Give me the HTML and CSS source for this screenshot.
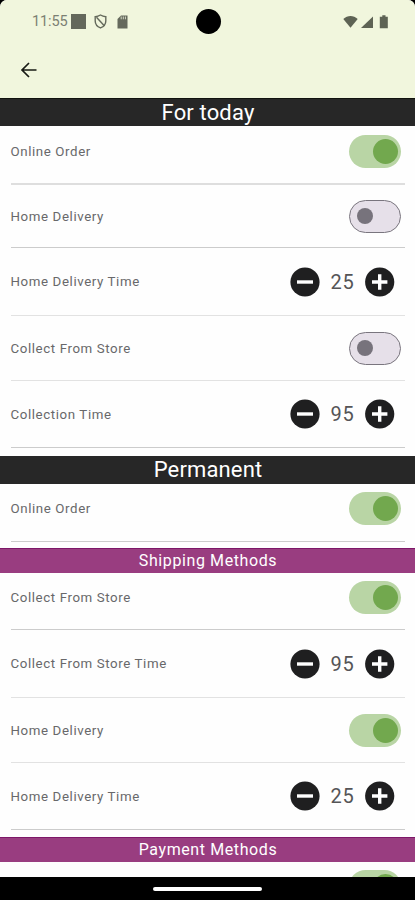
FILE: index.html
```html
<!DOCTYPE html>
<html lang="en">
<head>
<meta charset="utf-8">
<title>Store settings</title>
<link rel="stylesheet" href="styles.css">
</head>
<body>
<svg class="defs" width="0" height="0" aria-hidden="true">
  <symbol id="minus" viewBox="0 0 30 30"><circle cx="15" cy="15" r="14.6" fill="#1f1f20"/><path d="M7 15h16" stroke="#fff" stroke-width="3.4"/></symbol>
  <symbol id="plus" viewBox="0 0 30 30"><circle cx="14.700" cy="15" r="14.6" fill="#1f1f20"/><path d="M7 15h15.4M14.700 7.300v15.4" stroke="#fff" stroke-width="3.4"/></symbol>
</svg>
<div class="screen">
  <header class="top">
    <div class="status">
      <span class="clock">11:55</span>
      <span class="square"></span>
      <svg class="shield" width="13" height="15" viewBox="0 0 13 15" fill="none" stroke="#656a5c" stroke-width="1.4"><path d="M6.5 1C4.8 2 3 2.5 1.2 2.7V7c0 3.3 2.2 5.700 5.300 6.900C9.600 12.700 11.800 10.300 11.800 7V2.700C10 2.500 8.200 2 6.500 1z"/><path d="M2.500 3.200l7.500 8.300"/></svg>
      <svg class="sd" width="11" height="14" viewBox="0 0 11 14"><path d="M4 0.500h6.500v13H0.500V4z" fill="#65695c"/><path d="M4.200 1.500v2.800M6.300 1.500v2.800M8.400 1.500v2.800" stroke="#d5dac6" stroke-width="1"/></svg>
      <span class="camera"></span>
      <svg class="signals" width="46" height="14" viewBox="0 0 46 14" fill="#5e6354"><path d="M0.300 4C4.500 0 10.500 0 14.700 4L7.500 12.800z"/><path d="M30 1.500V13H18z"/><path d="M39.300 0.300h3.200v1.500h2.300V13.200h-8V1.800h2.500z"/></svg>
    </div>
    <svg class="back" width="18" height="18" viewBox="0 0 18 18" fill="none" stroke="#191b15" stroke-width="1.700"><path d="M16.500 9H2M9 2L2 9l7 7"/></svg>
  </header>
  <main>
    <h1 class="band">For today</h1>
    <div class="row first"><span>Online Order</span><i class="switch on"></i></div>
    <div class="row short"><span>Home Delivery</span><i class="switch"></i></div>
    <div class="row step tall light"><span>Home Delivery Time</span><div class="stepper"><svg><use href="#minus"/></svg><b>25</b><svg><use href="#plus"/></svg></div></div>
    <div class="row mid light"><span>Collect From Store</span><i class="switch"></i></div>
    <div class="row step"><span>Collection Time</span><div class="stepper"><svg><use href="#minus"/></svg><b>95</b><svg><use href="#plus"/></svg></div></div>
    <h1 class="band second">Permanent</h1>
    <div class="row first perm"><span>Online Order</span><i class="switch on"></i></div>
    <h2 class="sub">Shipping Methods</h2>
    <div class="row ship"><span>Collect From Store</span><i class="switch on"></i></div>
    <div class="row step tall light"><span>Collect From Store Time</span><div class="stepper"><svg><use href="#minus"/></svg><b>95</b><svg><use href="#plus"/></svg></div></div>
    <div class="row mid light"><span>Home Delivery</span><i class="switch on"></i></div>
    <div class="row step"><span>Home Delivery Time</span><div class="stepper"><svg><use href="#minus"/></svg><b>25</b><svg><use href="#plus"/></svg></div></div>
    <h2 class="sub">Payment Methods</h2>
    <div class="row ship"><i class="switch on"></i></div>
  </main>
  <footer class="nav"><span></span></footer>
</div>
</body>
</html>
```

FILE: styles.css
```css
* { box-sizing: border-box; }
body { margin: 0; background: #000; font-family: Roboto, "Liberation Sans", sans-serif; }
.defs { display: none; }
.screen { display: flex; flex-direction: column; height: 900px; overflow: hidden; background: #fefefe; border-radius: 7px 7px 0 0; }
.top { height: 99px; flex: none; background: #f1f6dd; border-bottom: 1px solid #11130e; }
.status { position: relative; display: flex; align-items: center; height: 43px; padding-left: 32px; padding-right: 26px; }
.clock { width: 38.5px; font-size: 14.5px; letter-spacing: -.1px; color: #7c8073; }
.square { width: 15px; height: 15px; background: #64685b; }
.shield { margin-left: 8px; }
.sd { margin-left: 10px; }
.signals { margin-left: auto; }
.camera { position: absolute; left: 195.5px; top: 9px; width: 25px; height: 25px; border-radius: 50%; background: #000; }
.back { display: block; margin: 18px 0 0 20px; }
main { flex: 1; min-height: 0; overflow: hidden; }
.band, .sub { margin: 0; padding-left: 1px; color: #fff; text-align: center; font-weight: 400; }
.band { height: 27px; background: #272727; font-size: 22px; line-height: 27px; letter-spacing: .15px; }
.second { height: 28px; margin-top: 8px; }
.sub { height: 25px; margin-top: 7px; background: #993d80; border-top: 1px solid #7d1768; font-size: 16px; line-height: 23px; letter-spacing: .6px; }
.row { display: flex; align-items: center; justify-content: space-between; height: 64px; margin: 0 10px 0 10.5px; padding-right: 4px; border-bottom: 1px solid #ccc; font-size: 13.3px; letter-spacing: .6px; color: #68686a; }
.row.light { border-color: #e2e2e2; }
.row.first { height: 59px; padding-bottom: 7px; border-bottom: 2px solid #dedede; }
.row.short { height: 63px; }
.row.ship { height: 57px; padding-bottom: 7px; }
.row.mid { height: 65px; }
.row.step { height: 67px; padding-right: 10px; }
.row.tall { height: 68px; }
.row.perm { height: 58px; padding-bottom: 8px; border-bottom: 1px solid #ccc; }
.perm + .sub { margin-top: 6px; }
.switch { width: 52.5px; height: 33px; margin-left: auto; padding: 7px; border: 1.5px solid #79757e; border-radius: 17px; background: #e6e0e9; }
.switch::before { content: ""; display: block; width: 16px; height: 16px; border-radius: 50%; background: #77737c; }
.switch.on { padding: 4px 4px 4px 24px; border: 0; background: #b9d5a5; }
.switch.on::before { width: 25px; height: 25px; background: #72a84e; }
.stepper { display: flex; align-items: center; }
.stepper svg { width: 30px; height: 30px; }
.stepper b { width: 45px; text-align: center; font-size: 20px; font-weight: 400; letter-spacing: .8px; color: #555557; }
.nav { display: flex; align-items: center; justify-content: center; height: 23px; flex: none; background: #000; }
.nav span { width: 109px; height: 4px; border-radius: 2px; background: #fff; }
```
